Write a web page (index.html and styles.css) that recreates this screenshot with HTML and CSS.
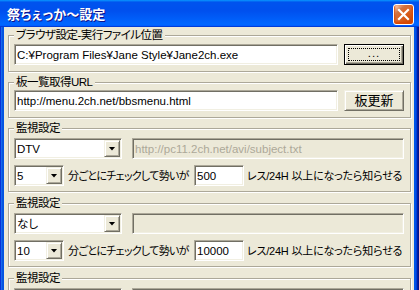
FILE: index.html
```html
<!DOCTYPE html>
<html>
<head>
<meta charset="UTF-8" />
<title>祭ちぇっか～設定</title>
<link rel="stylesheet" href="styles.css">
</head>
<body>
<div class="window">
	<div class="titlebar">
		<span class="title">祭ちぇっか～設定</span>
		<span class="close"><svg width="19" height="19" viewBox="0 0 19 19"><path d="M5 5L14 14M14 5L5 14" stroke="#fff" stroke-width="2.2" stroke-linecap="square" /></svg></span>
	</div>
	<div class="client">
		<fieldset class="group g1">
			<legend>ブラウザ設定-実行ファイル位置</legend>
			<div class="body pair">
				<div class="edit">C:¥Program Files¥Jane Style¥Jane2ch.exe</div>
				<div class="btn default"><span class="focus">...</span></div>
			</div>
		</fieldset>
		<fieldset class="group g2">
			<legend>板一覧取得URL</legend>
			<div class="body pair">
				<div class="edit">http://menu.2ch.net/bbsmenu.html</div>
				<div class="btn"><span class="cap">板更新</span></div>
			</div>
		</fieldset>
		<fieldset class="group watch">
			<legend>監視設定</legend>
			<div class="body">
				<div class="top">
					<div class="combo"><span class="value">DTV</span><span class="arrow"><i></i></span></div>
					<div class="edit off">http://pc11.2ch.net/avi/subject.txt</div>
				</div>
				<div class="bottom">
					<div class="combo"><span class="value">5</span><span class="arrow"><i></i></span></div>
					<span class="label">分ごとにチェックして勢いが</span>
					<div class="edit">500</div>
					<span class="label tail">レス/24H 以上になったら知らせる</span>
				</div>
			</div>
		</fieldset>
		<fieldset class="group watch">
			<legend>監視設定</legend>
			<div class="body">
				<div class="top">
					<div class="combo"><span class="value">なし</span><span class="arrow"><i></i></span></div>
					<div class="edit off"></div>
				</div>
				<div class="bottom">
					<div class="combo"><span class="value">10</span><span class="arrow"><i></i></span></div>
					<span class="label">分ごとにチェックして勢いが</span>
					<div class="edit">10000</div>
					<span class="label tail">レス/24H 以上になったら知らせる</span>
				</div>
			</div>
		</fieldset>
		<fieldset class="group watch">
			<legend>監視設定</legend>
			<div class="body">
				<div class="top">
					<div class="combo"><span class="value">なし</span><span class="arrow"><i></i></span></div>
					<div class="edit off"></div>
				</div>
				<div class="bottom">
					<div class="combo"><span class="value">10</span><span class="arrow"><i></i></span></div>
					<span class="label">分ごとにチェックして勢いが</span>
					<div class="edit">10000</div>
					<span class="label tail">レス/24H 以上になったら知らせる</span>
				</div>
			</div>
		</fieldset>
	</div>
</div>
</body>
</html>
```

FILE: styles.css
```css
* {
	box-sizing: border-box;
}
body {
	margin: 0;
	width: 419px;
	height: 290px;
	overflow: hidden;
	font: 11.5px/14px "Liberation Sans", "Noto Sans CJK JP", sans-serif;
	font-feature-settings: "palt";
	color: #000;
	user-select: none;
}
.window {
	height: 290px;
	display: flex;
	flex-direction: column;
	background: #0055e5;
	box-shadow: inset 1px 0 #0831d9, inset 2px 0 #166aee, inset 3px 0 #0855dd, inset -1px 0 #00138c, inset -2px 0 #001ea0, inset -3px 0 #003bda;
}
.titlebar {
	flex: none;
	height: 27px;
	display: flex;
	align-items: flex-start;
	padding: 0 5px 0 7px;
	background: linear-gradient(180deg, #0997ff, #0053ee 8%, #0050ee 40%, #06f 88%, #06f 93%, #005bff 95%, #003dd7 96%, #003dd7);
}
.title {
	flex: 1;
	margin-top: 7px;
	color: #fff;
	font-weight: bold;
	font-size: 13px;
	line-height: 15px;
	text-shadow: 1px 1px #0f1089;
}
.close {
	width: 21px;
	height: 21px;
	margin-top: 4px;
	border: 1px solid #fff;
	border-radius: 3px;
	background: radial-gradient(circle at 90% 90%, #cc4600 0, #dc6527 55%, #cd7546 70%, #ffccb2 90%, #fff 100%);
	box-shadow: inset 0 -1px 2px 1px #da4600;
}
.close svg {
	display: block;
}
.client {
	flex: 1;
	margin: 0 5px 0 4px;
	padding: 1px 3px 0 4px;
	background: #ece9d8;
	overflow: hidden;
}

/* Gruppen */
.group {
	margin: 0;
	padding: 0;
	border: 1px solid #aca899;
	box-shadow: inset 1px 1px #fff, 1px 1px #fff;
	min-width: 0;
}
.group legend {
	margin-left: 5px;
	padding: 0 2px;
	line-height: 14px;
	letter-spacing: -0.5px;
	background: #ece9d8;
}
.g2, .watch {
	margin-top: 3px;
}
.watch + .watch {
	margin-top: 4px;
}
.body {
	padding: 2px 6px 6px 5px;
}
.g2 .body {
	padding-top: 1px;
}
.watch .body {
	padding-top: 3px;
	padding-bottom: 5px;
}
.pair {
	display: flex;
	gap: 6px;
}
.pair .edit {
	width: 324px;
}
.top {
	display: grid;
	grid-template-columns: 108px 1fr;
	column-gap: 10px;
}
.bottom {
	display: grid;
	grid-template-columns: 50px 122px 50px 1fr;
	column-gap: 4px;
	margin-top: 6px;
	align-items: center;
}
.bottom .edit + .label {
	margin-left: -1px;
}

/* Eingabefelder */
.edit, .combo {
	height: 21px;
	border: 1px solid;
	border-color: #aca899 #fff #fff #aca899;
	box-shadow: inset 1px 1px #716f64, inset -1px -1px #f1efe2;
	background: #fff;
	white-space: nowrap;
	overflow: hidden;
}
.edit {
	padding: 3px 3px 0 2px;
}
.edit.off {
	background: #ece9d8;
	color: #aca899;
}
.combo {
	display: flex;
	padding: 1px;
}
.combo .value {
	flex: 1;
	padding: 2px 0 0 1px;
}
.combo .arrow, .btn {
	background: #ece9d8;
	border: 1px solid;
	border-color: #f1efe2 #716f64 #716f64 #f1efe2;
	box-shadow: inset 1px 1px #fff, inset -1px -1px #aca899;
}
.combo .arrow {
	width: 16px;
	display: flex;
	align-items: center;
	justify-content: center;
}
.combo .arrow i {
	width: 7px;
	height: 4px;
	background: #000;
	clip-path: polygon(0 0, 100% 0, 50% 100%);
}
.label {
	white-space: nowrap;
	font-size: 11px;
	letter-spacing: -0.7px;
}
.label.tail {
	letter-spacing: -0.2px;
}

/* Buttons */
.btn {
	width: 60px;
	height: 21px;
	display: flex;
	align-items: center;
	justify-content: center;
}
.btn .cap {
	font-size: 13px;
}
.btn.default {
	border: 1px solid #000;
	box-shadow: inset 1px 1px #fff, inset -1px -1px #716f64, inset -2px -2px #aca899;
	padding: 3px;
	align-items: stretch;
}
.btn .focus {
	flex: 1;
	border: 1px dotted #000;
	text-align: center;
	line-height: 8px;
	letter-spacing: 1px;
}
```
